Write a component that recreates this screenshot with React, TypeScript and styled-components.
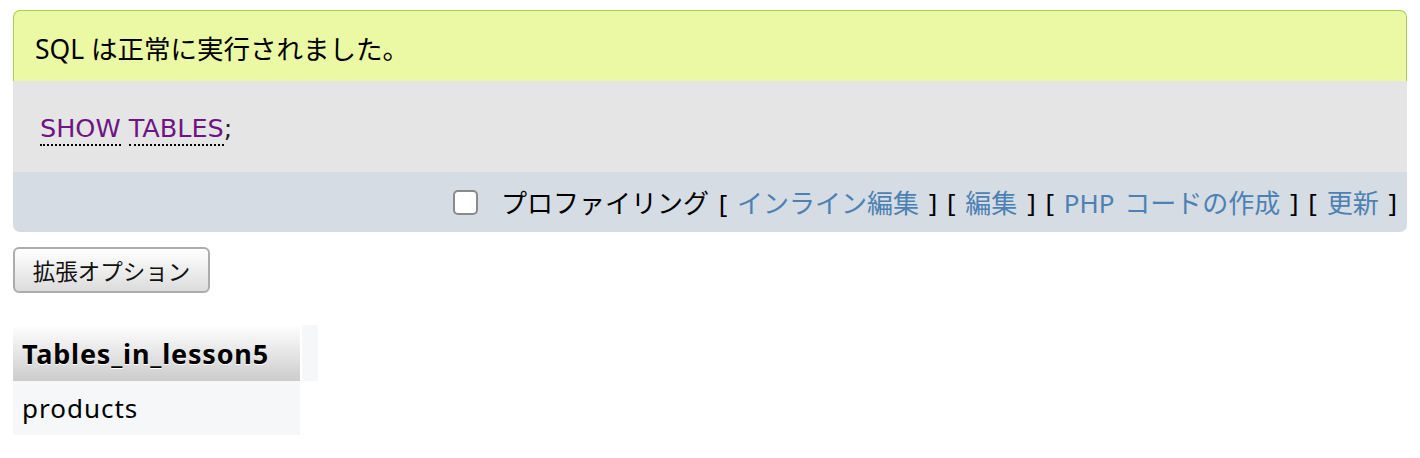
import React from 'react';
import styled, { createGlobalStyle } from 'styled-components';

const GlobalStyle = createGlobalStyle`
    html, body {
        margin: 0;
        padding: 0;
        background: #fff;
    }
    body {
        font-family: "Noto Sans", "Noto Sans CJK JP", sans-serif;
        font-size: 26px;
        color: #000;
    }
`

const Page = styled.div`
    padding: 10px 13px;
`

const ResultBox = styled.div`
    display: flex;
    flex-direction: column;
`

const Success = styled.div`
    height: 71px;
    box-sizing: border-box;
    display: flex;
    align-items: center;
    padding-left: 21px;
    padding-top: 2px;
    background: #ebf8a4;
    border: 1px solid #a3d14b;
    border-bottom: none;
    border-radius: 7px 7px 0 0;
    font-size: 26.5px;
`

const SqlArea = styled.div`
    height: 91px;
    box-sizing: border-box;
    display: flex;
    align-items: center;
    padding-left: 27px;
    padding-top: 2px;
    background: #e5e5e5;
    font-family: "DejaVu Sans", sans-serif;
    font-size: 25.5px;
    color: #222;
`

const Keyword = styled.a`
    color: #6e1583;
    text-decoration: none;
    border-bottom: 2px dotted #000;
    padding-bottom: 1px;
`

const Toolbar = styled.div`
    height: 60px;
    box-sizing: border-box;
    display: flex;
    align-items: center;
    justify-content: flex-end;
    padding-right: 10px;
    background: #d5dce3;
    border-radius: 0 0 7px 7px;
    font-size: 26px;
    word-spacing: 3px;
    white-space: pre;
`

const Check = styled.span`
    width: 25px;
    height: 25px;
    box-sizing: border-box;
    border: 2px solid #8a8a8a;
    border-radius: 5px;
    background: #fff;
    margin-right: 23px;
`

const Link = styled.a`
    color: #4d81b3;
    text-decoration: none;
`

const OptionButton = styled.button`
    margin-top: 15px;
    width: 197px;
    height: 46px;
    font-family: "Noto Sans CJK JP", sans-serif;
    font-size: 22.5px;
    color: #111;
    background: linear-gradient(#ffffff, #dcdcdc);
    border: 2px solid #acacac;
    border-radius: 6px;
    display: flex;
    align-items: center;
    justify-content: center;
    padding: 0;
`

const Table = styled.table`
    margin-top: 32px;
    margin-left: -2px;
    border-collapse: separate;
    border-spacing: 2px 0;
`

const HeadCell = styled.th`
    height: 56px;
    width: 287px;
    box-sizing: border-box;
    padding: 0 9px;
    text-align: left;
    font-weight: bold;
    font-size: 27px;
    letter-spacing: 0.8px;
    text-shadow: 0 1px 0 #fff;
    background: linear-gradient(#ffffff, #cccccc);
`

const MarkerCell = styled.th`
    width: 16px;
    padding: 0;
    background: #f5f7f9;
`

const Cell = styled.td`
    height: 54px;
    box-sizing: border-box;
    padding: 0 9px;
    font-size: 26px;
    letter-spacing: 1px;
    background: #f6f7f9;
`

const App: React.FC = () => {
    return (
        <Page>
            <GlobalStyle />
            <ResultBox>
                <Success>SQL は正常に実行されました。</Success>
                <SqlArea>
                    <span>
                        <Keyword>SHOW</Keyword> <Keyword>TABLES</Keyword>;
                    </span>
                </SqlArea>
                <Toolbar>
                    <Check />
                    <span>プロファイリング [ </span>
                    <Link>インライン編集</Link>
                    <span> ] [ </span>
                    <Link>編集</Link>
                    <span> ] [ </span>
                    <Link>PHP コードの作成</Link>
                    <span> ] [ </span>
                    <Link>更新</Link>
                    <span> ]</span>
                </Toolbar>
            </ResultBox>
            <OptionButton>拡張オプション</OptionButton>
            <Table>
                <thead>
                    <tr>
                        <HeadCell>Tables_in_lesson5</HeadCell>
                        <MarkerCell />
                    </tr>
                </thead>
                <tbody>
                    <tr>
                        <Cell>products</Cell>
                    </tr>
                </tbody>
            </Table>
        </Page>
    );
}

export default App;
